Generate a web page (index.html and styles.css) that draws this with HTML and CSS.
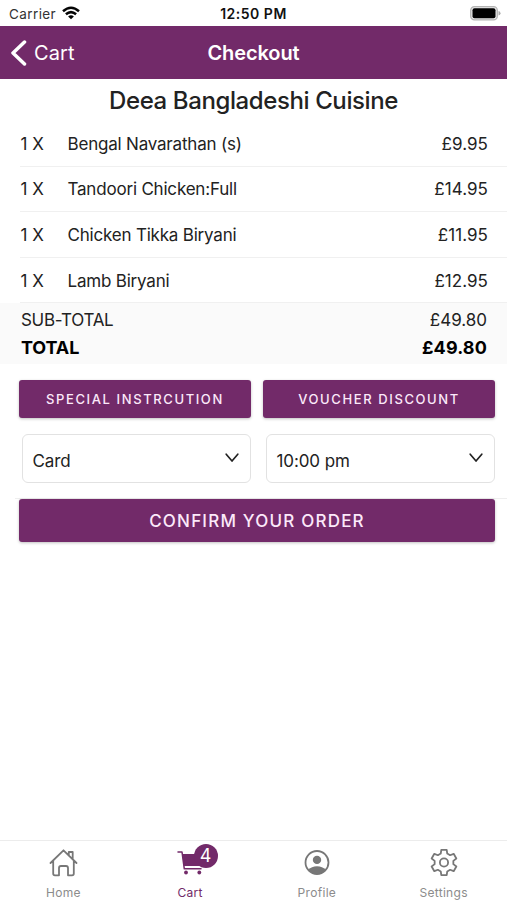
FILE: index.html
```html
<!DOCTYPE html>
<html lang="en">
<head>
<meta charset="utf-8">
<title>Checkout</title>
<link rel="stylesheet" href="styles.css">
</head>
<body>
<div class="app">
  <div class="status">
    <div class="carrier"><span>Carrier</span>
      <svg width="18" height="14" viewBox="0 0 18 14" fill="none" stroke="#050505" stroke-width="2.5"><path d="M1 5.2Q9-1.8 17 5.2M3.9 8.3Q9 3.9 14.1 8.3"/><path d="M6.1 10.4Q9 7.9 11.9 10.4L9 13.3Z" fill="#050505" stroke="none"/></svg>
    </div>
    <span class="clock">12:50 PM</span>
    <svg class="battery" width="31" height="15" viewBox="0 0 31 15"><rect x=".7" y=".7" width="26.6" height="13.2" rx="3.7" fill="#e9e9e9" stroke="#b4b4b4" stroke-width="1.3"/><rect x="2.5" y="2.3" width="23" height="10" rx="2" fill="#000"/><path d="M28.5 5q2 .6 2 2.3t-2 2.3z" fill="#aaa"/></svg>
  </div>
  <header class="header">
    <div class="back"><svg width="16" height="26" viewBox="0 0 16 26" fill="none" stroke="#fff" stroke-width="3.5" stroke-linecap="round" stroke-linejoin="round"><path d="M13.5 2L2 13l11.500 11"/></svg><span>Cart</span></div>
    <h1>Checkout</h1>
    <div></div>
  </header>
  <main>
    <h2><span>Deea Bangladeshi Cuisine</span></h2>
    <ul class="items">
      <li><span class="qty">1 X</span><span class="name">Bengal Navarathan (s)</span><span class="price">£9.95</span></li>
      <li><span class="qty">1 X</span><span class="name">Tandoori Chicken:Full</span><span class="price">£14.95</span></li>
      <li><span class="qty">1 X</span><span class="name">Chicken Tikka Biryani</span><span class="price">£11.95</span></li>
      <li><span class="qty">1 X</span><span class="name">Lamb Biryani</span><span class="price">£12.95</span></li>
    </ul>
    <div class="summary">
      <div class="sum"><span>SUB-TOTAL</span><span class="amount">£49.80</span></div>
      <div class="sum total"><span>TOTAL</span><span class="amount">£49.80</span></div>
    </div>
    <div class="actions">
      <button class="btn">SPECIAL INSTRCUTION</button>
      <button class="btn">VOUCHER DISCOUNT</button>
    </div>
    <div class="selects">
      <div class="select"><span>Card</span><svg width="14" height="10" viewBox="0 0 14 10" fill="none" stroke="#222" stroke-width="1.7" stroke-linecap="round" stroke-linejoin="round"><path d="M1.2 1.2L7 8l5.800-6.800"/></svg></div>
      <div class="select"><span>10:00 pm</span><svg width="14" height="10" viewBox="0 0 14 10" fill="none" stroke="#222" stroke-width="1.7" stroke-linecap="round" stroke-linejoin="round"><path d="M1.2 1.2L7 8l5.800-6.800"/></svg></div>
    </div>
    <div class="confirm-row"><button class="btn confirm">CONFIRM YOUR ORDER</button></div>
  </main>
  <nav class="tabs">
    <div class="tab">
      <svg width="30" height="30" viewBox="0 0 30 30" fill="none" stroke="#777" stroke-width="1.8" stroke-linecap="round" stroke-linejoin="round"><path d="M2.500 15L15.500 2.300 28.500 15M5.200 12.500V25.500q0 1.800 1.800 1.800h4V20q0-2 2-2h5q2 0 2 2v7.300h4q1.800 0 1.800-1.800V12.500M20.800 7V4h3.900v7"/></svg>
      <span>Home</span>
    </div>
    <div class="tab active">
      <div class="cart-icon">
        <svg width="30" height="30" viewBox="0 0 30 30" fill="none" stroke="#722a69"><path d="M3 4H7L9.300 20.800H26" stroke-width="1.500" stroke-linecap="round" stroke-linejoin="round"/><path d="M7 6H28L26 18H9Z" fill="#722a69" stroke="none"/><circle cx="11" cy="24.500" r="1.900" fill="#722a69" stroke="none"/><circle cx="24.300" cy="24.500" r="1.900" fill="#722a69" stroke="none"/></svg>
        <b class="badge">4</b>
      </div>
      <span>Cart</span>
    </div>
    <div class="tab">
      <svg width="30" height="30" viewBox="0 0 30 30"><circle cx="15" cy="14.500" r="11.500" fill="none" stroke="#777" stroke-width="1.800"/><circle cx="15" cy="11.900" r="4.200" fill="#777"/><path d="M6.300 21.800Q9.500 18.200 15 18.200t8.700 3.600Q20.300 26 15 26t-8.700-4.200z" fill="#777"/></svg>
      <span>Profile</span>
    </div>
    <div class="tab">
      <svg width="30" height="30" viewBox="0 0 30 30" fill="none" stroke="#777" stroke-width="1.800" stroke-linejoin="round"><circle cx="15" cy="14.500" r="4.100"/><path d="M12.300 1.800H17.700L18.250 5.570 21.110 7.220 24.660 5.800 27.360 10.480 24.360 12.850V16.150L27.360 18.520 24.660 23.200 21.110 21.780 18.250 23.430 17.700 27.200H12.300L11.750 23.430 8.890 21.780 5.340 23.200 2.640 18.520 5.640 16.150V12.850L2.640 10.480 5.340 5.800 8.890 7.220 11.750 5.570Z"/></svg>
      <span>Settings</span>
    </div>
  </nav>
</div>
</body>
</html>
```
FILE: styles.css
```css
* { box-sizing: border-box; }
body { margin: 0; background: #fff; color: #222; font-family: Inter, "Liberation Sans", sans-serif; }
h1, h2, ul { margin: 0; padding: 0; }
svg { display: block; flex: none; }
span, h1, h2 { white-space: nowrap; }
.app { width: 507px; height: 900px; display: flex; flex-direction: column; overflow: hidden; }

.status { height: 26px; flex: none; display: grid; grid-template-columns: 1fr auto 1fr; align-items: center; padding: 1px 6px 0 9px; font-size: 13.5px; }
.carrier { display: flex; align-items: center; gap: 6px; color: #333; letter-spacing: .4px; }
.carrier svg { margin-top: -2px; }
.clock { margin-left: -3px; font-weight: 600; color: #111; font-size: 14px; letter-spacing: .5px; }
.battery { justify-self: end; }

.header { height: 53px; flex: none; display: grid; grid-template-columns: 1fr auto 1fr; align-items: center; padding: 0 11px; background: #722a69; color: #fff; }
.back { display: flex; align-items: center; gap: 7px; font-size: 20px; letter-spacing: .1px; }
h1 { font-size: 20px; font-weight: 600; letter-spacing: -.1px; }

main { flex: 1; }
h2 { height: 42px; padding-top: 1px; line-height: 41px; text-align: center; font-size: 24px; font-weight: 500; letter-spacing: -.4px; }
.items { list-style: none; padding-left: 20px; font-size: 17px; }
.items li { height: 45.600px; display: flex; align-items: center; padding: 1px 19px 0 .5px; border-bottom: 1px solid #f0f0f0; }
.qty { width: 47px; letter-spacing: 0; }
.name { flex: 1; letter-spacing: -.2px; }
.price { letter-spacing: .05px; }
.summary { height: 60.500px; padding: 3px 20px 0 21px; background: #fafafa; }
.sum { height: 27.500px; display: flex; align-items: center; justify-content: space-between; font-size: 17px; letter-spacing: -.3px; }
.amount { letter-spacing: 0; }
.total { color: #000; font-size: 18px; font-weight: 700; letter-spacing: -.1px; }
.total .amount { letter-spacing: .15px; }

.actions { display: grid; grid-template-columns: 232px 232px; gap: 12px; padding: 16px 0 0 19px; }
.btn { height: 38px; padding: 0; border: 0; border-radius: 3px; background: #722a69; color: #fce9fa; font-family: inherit; font-size: 13px; font-weight: 500; letter-spacing: 1.600px; box-shadow: 0 1px 3px rgba(0, 0, 0, .25); }
.selects { display: grid; grid-template-columns: 229px 229px; gap: 15px; padding: 16px 0 15px 22px; }
.select { height: 49px; display: flex; align-items: center; justify-content: space-between; padding: 5px 11px 0 9.500px; border: 1px solid #e2e2e2; border-radius: 6px; font-size: 17px; letter-spacing: -.1px; }
.select svg { margin-top: -5px; }
.confirm-row { margin-left: 15px; padding: 0 12px 0 4px; border-top: 1px solid #eee; }
.confirm { display: block; width: 476px; height: 43px; padding-top: 2px; font-size: 17px; letter-spacing: 1.200px; }

.tabs { height: 60px; flex: none; display: grid; grid-template-columns: repeat(4, 1fr); border-top: 1px solid #ececec; }
.tab { display: flex; flex-direction: column; align-items: center; padding-top: 7px; color: #8c8c8c; font-size: 12px; }
.tab > span { margin-top: 7px; line-height: 15px; letter-spacing: .3px; }
.active { color: #722a69; }
.cart-icon { position: relative; }
.badge { position: absolute; left: 18.500px; top: -4px; width: 24px; height: 24px; border-radius: 50%; background: #722a69; color: #fff; font-size: 18px; font-weight: 400; line-height: 24px; text-align: center; }
```
